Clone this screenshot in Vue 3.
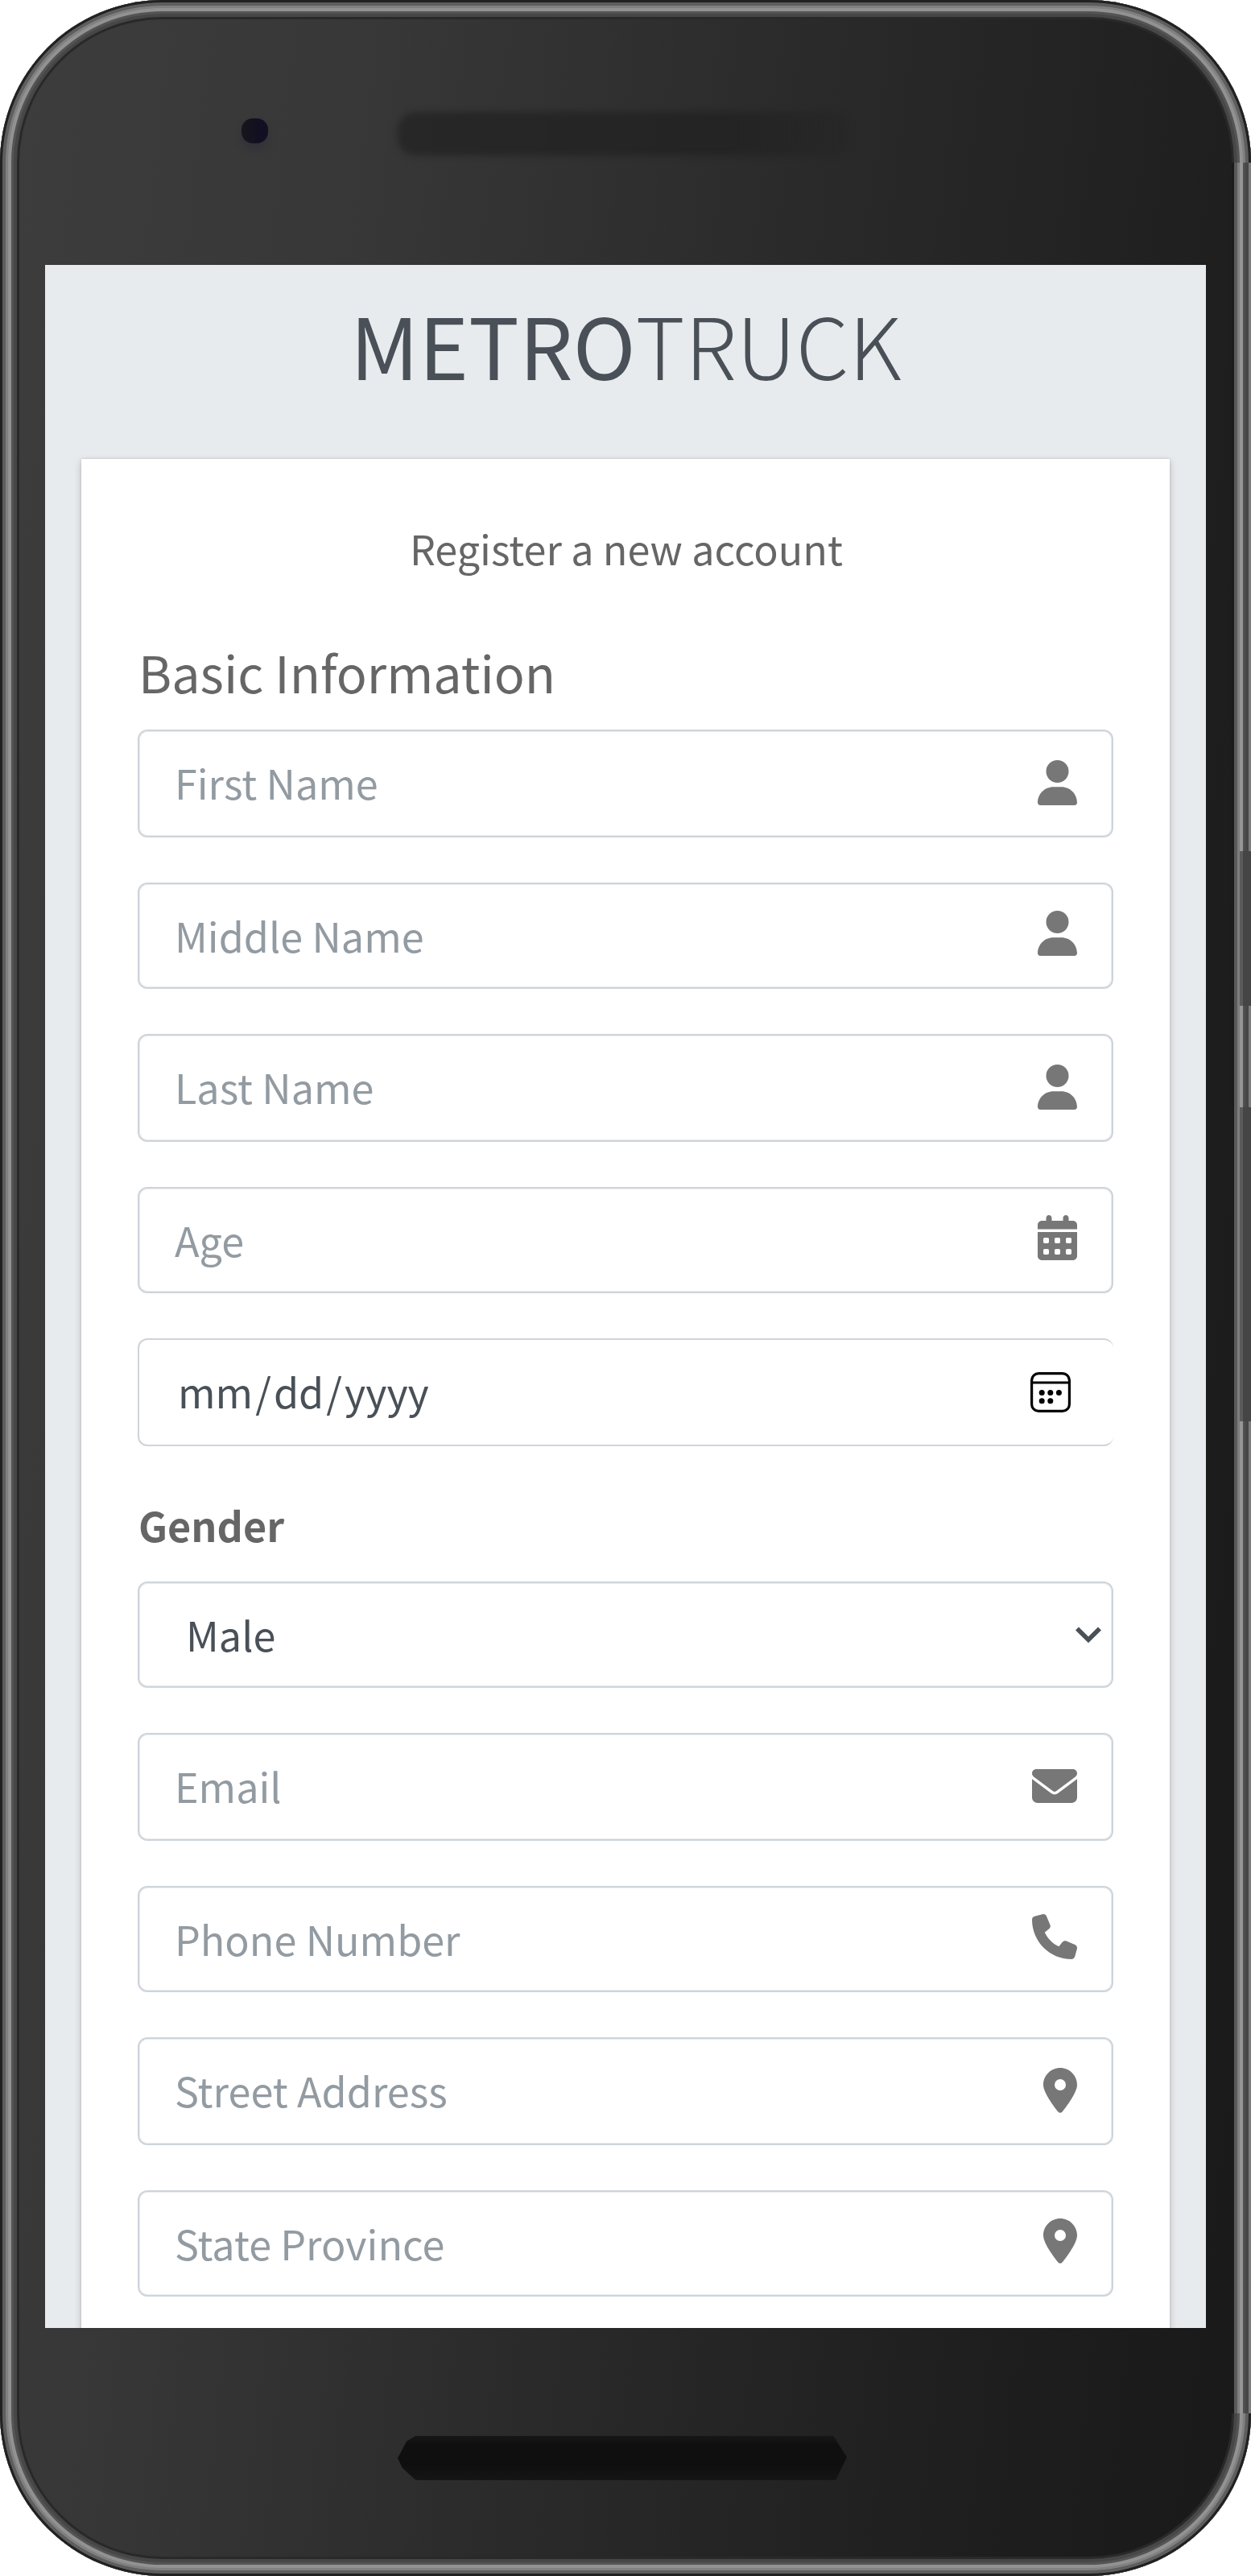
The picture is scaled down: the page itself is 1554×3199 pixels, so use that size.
<script setup>
const icons = {
  user: {
    w: 448,
    d: 'M224 256A128 128 0 1 0 224 0a128 128 0 1 0 0 256zm-45.7 48C79.8 304 0 383.8 0 482.3C0 498.7 13.3 512 29.7 512H418.3c16.4 0 29.7-13.3 29.7-29.7C448 383.8 368.2 304 269.7 304H178.3z',
  },
  calendar: {
    w: 448,
    d: 'M128 0c17.7 0 32 14.3 32 32V64H288V32c0-17.7 14.3-32 32-32s32 14.3 32 32V64h48c26.5 0 48 21.5 48 48v48H0V112C0 85.5 21.5 64 48 64H96V32c0-17.7 14.3-32 32-32zM0 192H448V464c0 26.5-21.5 48-48 48H48c-26.5 0-48-21.5-48-48V192zm64 80v32c0 8.8 7.2 16 16 16h32c8.8 0 16-7.2 16-16V272c0-8.8-7.2-16-16-16H80c-8.8 0-16 7.2-16 16zm128 0v32c0 8.8 7.2 16 16 16h32c8.8 0 16-7.2 16-16V272c0-8.8-7.2-16-16-16H208c-8.8 0-16 7.2-16 16zm144-16c-8.8 0-16 7.2-16 16v32c0 8.8 7.2 16 16 16h32c8.8 0 16-7.2 16-16V272c0-8.8-7.2-16-16-16H336zM64 400v32c0 8.8 7.2 16 16 16h32c8.8 0 16-7.2 16-16V400c0-8.8-7.2-16-16-16H80c-8.8 0-16 7.2-16 16zm144-16c-8.8 0-16 7.2-16 16v32c0 8.8 7.2 16 16 16h32c8.8 0 16-7.2 16-16V400c0-8.8-7.2-16-16-16H208zm112 16v32c0 8.8 7.2 16 16 16h32c8.8 0 16-7.2 16-16V400c0-8.8-7.2-16-16-16H336c-8.8 0-16 7.2-16 16z',
  },
  envelope: {
    w: 512,
    d: 'M48 64C21.5 64 0 85.5 0 112c0 15.1 7.1 29.3 19.2 38.4L236.8 313.6c11.4 8.5 27 8.5 38.4 0L492.8 150.4c12.1-9.1 19.2-23.3 19.2-38.4c0-26.5-21.5-48-48-48H48zM0 176V384c0 35.3 28.7 64 64 64H448c35.3 0 64-28.7 64-64V176L294.4 339.2c-22.8 17.1-54 17.1-76.8 0L0 176z',
  },
  phone: {
    w: 512,
    d: 'M164.9 24.6c-7.7-18.6-28-28.5-47.4-23.2l-88 24C12.1 30.2 0 46 0 64C0 311.4 200.6 512 448 512c18 0 33.8-12.1 38.6-29.5l24-88c5.3-19.4-4.6-39.7-23.2-47.4l-96-40c-16.3-6.8-35.2-2.1-46.3 11.6L304.7 368C234.3 334.7 177.3 277.7 144 207.3L193.3 167c13.7-11.2 18.4-30 11.6-46.3l-40-96z',
  },
  pin: {
    w: 384,
    d: 'M215.7 499.2C267 435 384 279.4 384 192C384 86 298 0 192 0S0 86 0 192c0 87.4 117 243 168.3 307.2c12.3 15.3 35.1 15.3 47.4 0zM192 128a64 64 0 1 1 0 128 64 64 0 1 1 0-128z',
  },
}

const basicFields = [
  { label: 'First Name', icon: icons.user },
  { label: 'Middle Name', icon: icons.user, short: true },
  { label: 'Last Name', icon: icons.user },
  { label: 'Age', icon: icons.calendar, short: true },
]

const contactFields = [
  { label: 'Email', icon: icons.envelope },
  { label: 'Phone Number', icon: icons.phone, short: true },
  { label: 'Street Address', icon: icons.pin },
  { label: 'State Province', icon: icons.pin, short: true },
]
</script>

<template>
  <div class="phone">
    <i class="edge"></i>
    <i class="side-button power"></i>
    <i class="side-button volume"></i>
    <i class="camera"></i>
    <i class="speaker top"></i>
    <i class="speaker bottom"></i>

    <main class="screen">
      <h1 class="logo"><b>METRO</b>TRUCK</h1>
      <section class="card">
        <p class="intro">Register a new account</p>
        <h2 class="heading">Basic Information</h2>

        <div v-for="f in basicFields" :key="f.label" class="field" :class="{ short: f.short }">
          <span class="placeholder">{{ f.label }}</span>
          <svg class="icon" :viewBox="`0 0 ${f.icon.w} 512`"><path :d="f.icon.d" /></svg>
        </div>

        <div class="field date">
          <span class="value date-value"><span>mm</span><span>/</span><span>dd</span><span>/</span><span>yyyy</span></span>
          <svg class="picker" viewBox="0 0 50 50">
            <rect x="1.6" y="1.6" width="46.8" height="46.8" rx="8.5" fill="none" stroke="#000" stroke-width="3.2" />
            <path d="M2 13H48" stroke="#000" stroke-width="3.2" />
            <circle cx="14.2" cy="25.4" r="3.5" />
            <circle cx="24.8" cy="25.4" r="3.5" />
            <circle cx="35.4" cy="25.4" r="3.5" />
            <circle cx="14.2" cy="35.8" r="3.5" />
            <circle cx="24.8" cy="35.8" r="3.5" />
          </svg>
        </div>

        <div class="label">Gender</div>
        <div class="field short select">
          <span class="value">Male</span>
          <svg class="chevron" viewBox="0 0 32 21">
            <path d="M2 2.4L16 16.4L30 2.4" fill="none" stroke="#495057" stroke-width="5.6" />
          </svg>
        </div>

        <div v-for="f in contactFields" :key="f.label" class="field" :class="{ short: f.short }">
          <span class="placeholder">{{ f.label }}</span>
          <svg class="icon" :viewBox="`0 0 ${f.icon.w} 512`"><path :d="f.icon.d" /></svg>
        </div>
      </section>
    </main>
  </div>
</template>

<style>
body {
  margin: 0;
  background: #fff;
}
</style>

<style scoped>
.phone {
  position: relative;
  box-sizing: border-box;
  width: 1554px;
  height: 3199px;
  padding: 329px 56px 308px;
  overflow: hidden;
  border-radius: 202px;
  font-family: "Noto Sans CJK JP", "Noto Sans CJK SC", "Open Sans", sans-serif;
  background: linear-gradient(97deg, #3d3d3d 0%, #373737 25%, #292929 55%, #1e1e1e 82%, #191919 100%);
  box-shadow:
    inset 0 0 0 3px #212121,
    inset 0 0 0 7px #5e5e5e,
    inset 0 0 0 10px #808080,
    inset 0 0 0 14px #929292,
    inset 0 0 0 17px #545454,
    inset 0 0 0 21px #474747,
    inset 0 0 0 24px #292929;
}

.edge {
  position: absolute;
  right: 0;
  top: 202px;
  bottom: 202px;
  width: 24px;
  background: linear-gradient(to right,
    #1b1b1b 3px, #5a5a5a 3px 7px, #7e7e7e 7px 10px, #969696 10px 14px,
    #505050 14px 17px, #474747 17px 21px, #7c7c7c 21px);
}

.side-button {
  position: absolute;
  right: 0;
  width: 10px;
  background: #454545;
  border-left: 4px solid #5b5b5b;
}
.power { top: 1057px; height: 192px; }
.volume { top: 1375px; height: 390px; }

.camera {
  position: absolute;
  left: 300px;
  top: 147px;
  width: 33px;
  height: 31px;
  border-radius: 14px;
  background: linear-gradient(to right, #17171b, #130f22 60%);
  box-shadow: 0 7px 9px rgba(45, 43, 58, 0.5);
}

.speaker {
  position: absolute;
  left: 494px;
}
.speaker.top {
  top: 139px;
  width: 560px;
  height: 54px;
  border-radius: 22px;
  background: linear-gradient(to right, #272727, #242424 75%, rgba(36, 36, 36, 0.4));
  filter: blur(4px);
}
.speaker.bottom {
  top: 3025px;
  width: 558px;
  height: 55px;
  background: linear-gradient(#171717, #0f0f0f 20%, #0f0f0f 65%, #151515);
  clip-path: polygon(2% 12%, 4% 0, 97% 0, 100% 48%, 97.5% 100%, 4% 100%, 1% 72%, 0 50%);
}

.screen {
  position: relative;
  width: 1442px;
  height: 2562px;
  overflow: hidden;
  background: #e8ebee;
}

.logo {
  margin: 0 0 47px;
  padding-left: 1px;
  font-size: 105px;
  line-height: 194px;
  font-weight: 300;
  text-align: center;
  white-space: nowrap;
  color: #495057;
}
.logo b { font-weight: 400; }

.card {
  box-sizing: border-box;
  width: 1352px;
  height: 2500px;
  margin: 0 45px;
  padding: 50px 70px 0;
  background: #fff;
  box-shadow: 0 0 3px rgba(0, 0, 0, 0.125), 0 3px 9px rgba(0, 0, 0, 0.2);
}

.intro {
  margin: 0 0 46px;
  padding-left: 2px;
  font-size: 50.3px;
  line-height: 120px;
  text-align: center;
  color: #666;
}

.heading {
  margin: 0 0 24px;
  padding-left: 1px;
  font-size: 62.8px;
  line-height: 96px;
  font-weight: 400;
  color: #666;
}

.field {
  display: flex;
  align-items: flex-start;
  justify-content: space-between;
  box-sizing: border-box;
  width: 1212px;
  height: 134px;
  margin-bottom: 56px;
  padding: 0 43px 0 44px;
  border: 2px solid #ced4da;
  border-radius: 12px;
  box-shadow: inset 0 0 0 1px #e9ecef;
  font-size: 50.3px;
  line-height: 127px;
}
.field.short { height: 132px; }

.placeholder { color: #939ba2; }
.value { color: #495057; }

.icon {
  height: 56px;
  margin-top: 36px;
  fill: #777;
}
.short .icon { margin-top: 33px; }

.date {
  border-right: none;
  box-shadow: none;
  padding-right: 53px;
}
.date-value {
  display: flex;
  gap: 3px;
  padding-left: 4px;
}
.picker {
  width: 50px;
  height: 50px;
  margin-top: 40px;
}

.label {
  margin-bottom: 31px;
  padding: 1px 0 0 1px;
  font-size: 50.3px;
  line-height: 80px;
  font-weight: 700;
  color: #666;
}

.field.select { padding: 0 13px 0 58px; }
.chevron {
  width: 32px;
  height: 21px;
  margin-top: 54px;
}
</style>
